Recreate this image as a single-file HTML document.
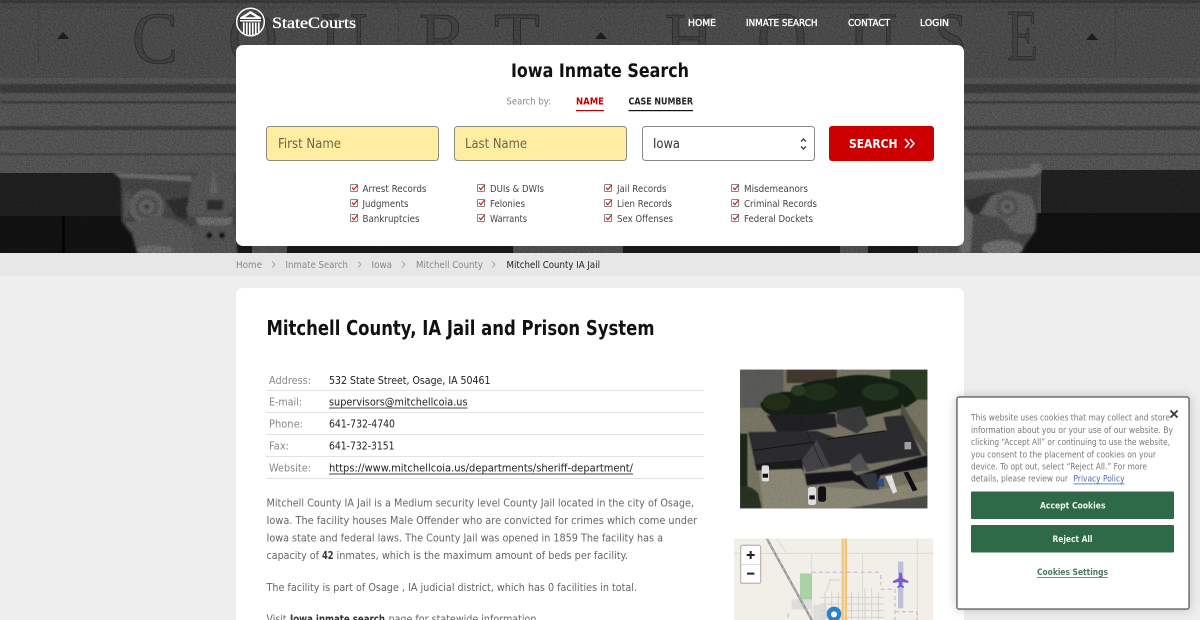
<!DOCTYPE html>
<html><head><meta charset="utf-8"><title>Mitchell County IA Jail</title>
<style>
html,body{margin:0;padding:0;background:#eee;width:1200px;height:620px;overflow:hidden}
svg{display:block}
text{font-family:"DejaVu Sans","Liberation Sans",sans-serif;font-size:10px;fill:#555}
.b{font-weight:bold}
.n{font-size:9.5px;fill:#fff;stroke:#fff;stroke-width:.35}
.c{font-size:9.5px;fill:#444}
.g{fill:#888}
.t{font-size:11px;fill:#888}
.v{font-size:11px;fill:#222}
.p{font-size:11px;fill:#666}
.k{font-size:8.8px;fill:#777}
.L{font-family:"Liberation Serif",serif;font-size:73px;fill:#484848;stroke:#2c2c2c;stroke-width:.8}
</style></head><body>
<svg width="1200" height="620" viewBox="0 0 1200 620" xmlns="http://www.w3.org/2000/svg">
<defs>
<filter id="noise" x="0" y="0" width="100%" height="100%" color-interpolation-filters="sRGB"><feTurbulence type="fractalNoise" baseFrequency="0.75" numOctaves="2" seed="4"/><feColorMatrix values="0 0 0 0 0  0 0 0 0 0  0 0 0 0 0  1.5 0 0 0 -0.55"/></filter>
<filter id="bl" x="-5%" y="-5%" width="110%" height="110%"><feGaussianBlur stdDeviation="0.7"/></filter>
<filter id="bz" x="-5%" y="-5%" width="110%" height="110%"><feGaussianBlur stdDeviation="3"/></filter>
<filter id="bp" x="-5%" y="-5%" width="110%" height="110%"><feGaussianBlur stdDeviation="1.4"/></filter>
<filter id="sh" x="-10%" y="-10%" width="120%" height="120%"><feDropShadow dx="0" dy="0" stdDeviation="5" flood-color="#000" flood-opacity=".2"/></filter>
</defs>
<rect width="1200" height="620" fill="#eee"/>
<!-- hero -->
<rect width="1200" height="253" fill="#525252"/>
<rect y="78" width="1200" height="95" fill="#5c5c5c"/>
<g filter="url(#bl)">
<rect y="0" width="1200" height="3" fill="#3a3a3a"/>
<rect y="7" width="1200" height="1" fill="#424242"/>
<rect y="84" width="1200" height="9" fill="#404040"/>
<rect y="101.500" width="1200" height="1.500" fill="#363636"/>
<rect y="126" width="1200" height="4" fill="#404040"/>
<rect y="153.500" width="1200" height="1.500" fill="#3a3a3a"/>
</g>
<g fill="#474747"><rect x="38" y="0" width="1" height="64"/><rect x="398" y="0" width="1" height="64"/><rect x="1115" y="8" width="1" height="56"/></g>
<g>
<text class="L" x="132" y="63" textLength="46" lengthAdjust="spacingAndGlyphs">C</text>
<text class="L" x="228" y="63" textLength="50" lengthAdjust="spacingAndGlyphs">O</text>
<text class="L" x="321" y="63" textLength="46" lengthAdjust="spacingAndGlyphs">U</text>
<text class="L" x="419" y="63" textLength="48" lengthAdjust="spacingAndGlyphs">R</text>
<text class="L" x="494" y="63" textLength="46" lengthAdjust="spacingAndGlyphs">T</text>
<text class="L" x="665" y="63" textLength="48" lengthAdjust="spacingAndGlyphs">H</text>
<text class="L" x="757" y="63" textLength="50" lengthAdjust="spacingAndGlyphs">O</text>
<text class="L" x="849" y="63" textLength="48" lengthAdjust="spacingAndGlyphs">U</text>
<text class="L" x="935" y="63" textLength="32" lengthAdjust="spacingAndGlyphs">S</text>
<text class="L" x="1007" y="60" textLength="31" lengthAdjust="spacingAndGlyphs">E</text>
</g>
<g fill="#202020"><path d="M57 39l6-7 6 7z"/><path d="M595 39l6-7 6 7z"/><path d="M1086 40l6-7 6 7z"/></g>
<!-- dark recess -->
<rect x="0" y="173" width="130" height="80" fill="#222"/>
<rect x="0" y="216" width="140" height="37" fill="#141414"/>
<rect x="62" y="216" width="3" height="37" fill="#050505"/>
<rect x="236" y="235" width="728" height="18" fill="#1c1c1c"/>
<g fill="#555"><rect x="252" y="246" width="35" height="7"/><rect x="513" y="246" width="110" height="7"/><rect x="840" y="246" width="28" height="7"/><rect x="918" y="246" width="46" height="7"/></g>
<rect x="1041" y="170" width="159" height="83" fill="#242424"/>
<rect x="1020" y="213" width="180" height="40" fill="#131313"/>
<!-- left capital -->
<g transform="translate(0 160) scale(.33333)" filter="url(#bz)">
<path d="M340 38H710V282H412L395 225 365 185 362 60z" fill="#4c4c4c"/>
<path d="M340 38L575 48V64L360 52z" fill="#757575"/>
<path d="M372 70L575 72V108L500 100 400 92z" fill="#4a4a4a"/>
<circle cx="440" cy="140" r="52" fill="#686868"/>
<circle cx="440" cy="140" r="34" fill="#565656"/><circle cx="440" cy="140" r="22" fill="#6d6d6d"/><circle cx="440" cy="140" r="9" fill="#474747"/>
<path d="M372 100L392 92 385 175 372 170z" fill="#5a5a5a"/>
<path d="M495 120L575 108 560 180 530 172z" fill="#303030"/>
<path d="M372 190L430 180 450 165 520 178 578 205 580 282H412L400 220z" fill="#5e5e5e"/>
<path d="M575 60L620 15 660 18 700 40 706 140 682 168 565 170 560 150z" fill="#5c5c5c"/>
<path d="M620 120L670 120 668 150 622 150z" fill="#303030"/>
<path d="M640 20L655 100 628 100z" fill="#6c6c6c"/>
<path d="M585 172L700 172 690 200 600 200z" fill="#757575"/>
<path d="M582 195L705 195 712 282H578z" fill="#5a5a5a"/>
<ellipse cx="628" cy="226" rx="9" ry="10" fill="#181818"/><ellipse cx="666" cy="226" rx="9" ry="10" fill="#181818"/>
<ellipse cx="465" cy="270" rx="55" ry="14" fill="#757575"/>
</g>
<!-- right capital -->
<g transform="translate(960 0) scale(.33333)" filter="url(#bz)">
<path d="M0 510H245L232 600 228 690 180 760H0z" fill="#4c4c4c"/>
<path d="M0 518L205 505 215 490 242 490 245 515 222 530 0 540z" fill="#757575"/>
<path d="M10 545L218 532 190 570 110 570 10 585z" fill="#4e4e4e"/>
<path d="M15 600L105 575 60 640 30 645z" fill="#343434"/>
<path d="M60 640L92 590 150 570 215 590 228 640 222 700 170 702 120 660z" fill="#676767"/>
<circle cx="142" cy="620" r="32" fill="#565656"/><circle cx="142" cy="620" r="20" fill="#707070"/><circle cx="142" cy="620" r="8" fill="#484848"/>
<path d="M28 650L122 650 180 722 130 728 62 760H10z" fill="#505050"/>
<ellipse cx="128" cy="745" rx="62" ry="24" fill="#787878"/>
<path d="M0 600L40 650 30 760H0z" fill="#757575"/>
</g>
<rect width="1200" height="253" filter="url(#noise)" opacity=".5"/>
<!-- logo -->
<circle cx="250.500" cy="22" r="13.800" fill="none" stroke="#fff" stroke-width="1.500"/>
<g fill="#fff"><path d="M240 17.500L250.500 11 261 17.500V19H240z"/><rect x="240" y="20" width="21" height="1.500"/><rect x="243" y="22.500" width="1.600" height="11"/><rect x="246" y="22.500" width="1.600" height="12.500"/><rect x="249" y="22.500" width="1.600" height="13"/><rect x="252" y="22.500" width="1.600" height="13"/><rect x="255" y="22.500" width="1.600" height="12.500"/><rect x="258" y="22.500" width="1.600" height="11"/></g>
<path d="M245 17.200L250.500 13.700 256 17.200z" fill="#4d4d4d"/>
<text x="272" y="28" textLength="84" lengthAdjust="spacingAndGlyphs" style="font-family:'Liberation Serif',serif;font-size:16px;fill:#fff;stroke:#fff;stroke-width:.3">StateCourts</text>
<!-- nav -->
<text class="n" x="688" y="26" textLength="28" lengthAdjust="spacingAndGlyphs">HOME</text>
<text class="n" x="746" y="26" textLength="71.500" lengthAdjust="spacingAndGlyphs">INMATE SEARCH</text>
<text class="n" x="848" y="26" textLength="42" lengthAdjust="spacingAndGlyphs">CONTACT</text>
<text class="n" x="920" y="26" textLength="29" lengthAdjust="spacingAndGlyphs">LOGIN</text>
<!-- search card -->
<rect x="236" y="45" width="728" height="201" rx="7" fill="#fff"/>
<text class="b" x="511" y="77" textLength="178" lengthAdjust="spacingAndGlyphs" style="font-size:18.500px;fill:#111">Iowa Inmate Search</text>
<text class="g" x="506.500" y="104.500" textLength="44.500" lengthAdjust="spacingAndGlyphs" style="font-size:9.500px">Search by:</text>
<text class="b" x="576" y="104.500" textLength="28" lengthAdjust="spacingAndGlyphs" style="font-size:9.500px;fill:#c00000">NAME</text>
<rect x="576" y="110" width="28" height="1.200" fill="#c00000"/>
<text class="b" x="628.500" y="104.500" textLength="64.500" lengthAdjust="spacingAndGlyphs" style="font-size:9.500px;fill:#222">CASE NUMBER</text>
<rect x="628.500" y="110" width="64.500" height="1.200" fill="#111"/>
<rect x="266.500" y="126.500" width="172" height="34" rx="3" fill="#ffeda2" stroke="#8f8f80"/>
<rect x="454.500" y="126.500" width="172" height="34" rx="3" fill="#ffeda2" stroke="#8f8f80"/>
<rect x="642.500" y="126.500" width="172" height="34" rx="3" fill="#fff" stroke="#888"/>
<text x="278" y="148" textLength="63" lengthAdjust="spacingAndGlyphs" style="font-size:13.500px;fill:#6b6648">First Name</text>
<text x="465" y="148" textLength="62" lengthAdjust="spacingAndGlyphs" style="font-size:13.500px;fill:#6b6648">Last Name</text>
<text x="653" y="148" textLength="27" lengthAdjust="spacingAndGlyphs" style="font-size:13.500px;fill:#333">Iowa</text>
<path d="M801 141.500L803.500 139 806 141.500M801 146.500L803.500 149 806 146.500" fill="none" stroke="#222" stroke-width="1.200"/>
<rect x="829" y="126" width="105" height="35" rx="3" fill="#cc0000"/>
<text class="b" x="849" y="148" textLength="48.500" lengthAdjust="spacingAndGlyphs" style="font-size:12.500px;fill:#fff">SEARCH</text>
<path d="M905 139l4 4.500-4 4.500M910 139l4 4.500-4 4.500" fill="none" stroke="#fff" stroke-width="1.500"/>
<!-- checks -->
<g fill="none" stroke-width="1">
<g><rect x="350.500" y="184.500" width="7" height="7" rx=".8" stroke="#888"/><path d="M352 187.500l1.800 2.200 4-5" stroke="#c00"/></g>
<g transform="translate(0 15)"><rect x="350.500" y="184.500" width="7" height="7" rx=".8" stroke="#888"/><path d="M352 187.500l1.800 2.200 4-5" stroke="#c00"/></g>
<g transform="translate(0 30)"><rect x="350.500" y="184.500" width="7" height="7" rx=".8" stroke="#888"/><path d="M352 187.500l1.800 2.200 4-5" stroke="#c00"/></g>
<g transform="translate(127 0)"><rect x="350.500" y="184.500" width="7" height="7" rx=".8" stroke="#888"/><path d="M352 187.500l1.800 2.200 4-5" stroke="#c00"/></g>
<g transform="translate(127 15)"><rect x="350.500" y="184.500" width="7" height="7" rx=".8" stroke="#888"/><path d="M352 187.500l1.800 2.200 4-5" stroke="#c00"/></g>
<g transform="translate(127 30)"><rect x="350.500" y="184.500" width="7" height="7" rx=".8" stroke="#888"/><path d="M352 187.500l1.800 2.200 4-5" stroke="#c00"/></g>
<g transform="translate(254 0)"><rect x="350.500" y="184.500" width="7" height="7" rx=".8" stroke="#888"/><path d="M352 187.500l1.800 2.200 4-5" stroke="#c00"/></g>
<g transform="translate(254 15)"><rect x="350.500" y="184.500" width="7" height="7" rx=".8" stroke="#888"/><path d="M352 187.500l1.800 2.200 4-5" stroke="#c00"/></g>
<g transform="translate(254 30)"><rect x="350.500" y="184.500" width="7" height="7" rx=".8" stroke="#888"/><path d="M352 187.500l1.800 2.200 4-5" stroke="#c00"/></g>
<g transform="translate(381 0)"><rect x="350.500" y="184.500" width="7" height="7" rx=".8" stroke="#888"/><path d="M352 187.500l1.800 2.200 4-5" stroke="#c00"/></g>
<g transform="translate(381 15)"><rect x="350.500" y="184.500" width="7" height="7" rx=".8" stroke="#888"/><path d="M352 187.500l1.800 2.200 4-5" stroke="#c00"/></g>
<g transform="translate(381 30)"><rect x="350.500" y="184.500" width="7" height="7" rx=".8" stroke="#888"/><path d="M352 187.500l1.800 2.200 4-5" stroke="#c00"/></g>
</g>
<text class="c" x="362.500" y="192" textLength="64" lengthAdjust="spacingAndGlyphs">Arrest Records</text>
<text class="c" x="362.500" y="207" textLength="46" lengthAdjust="spacingAndGlyphs">Judgments</text>
<text class="c" x="362.500" y="222" textLength="57" lengthAdjust="spacingAndGlyphs">Bankruptcies</text>
<text class="c" x="490" y="192" textLength="54" lengthAdjust="spacingAndGlyphs">DUIs &amp; DWIs</text>
<text class="c" x="490" y="207" textLength="35" lengthAdjust="spacingAndGlyphs">Felonies</text>
<text class="c" x="490" y="222" textLength="37" lengthAdjust="spacingAndGlyphs">Warrants</text>
<text class="c" x="617" y="192" textLength="49.500" lengthAdjust="spacingAndGlyphs">Jail Records</text>
<text class="c" x="617" y="207" textLength="55" lengthAdjust="spacingAndGlyphs">Lien Records</text>
<text class="c" x="617" y="222" textLength="56" lengthAdjust="spacingAndGlyphs">Sex Offenses</text>
<text class="c" x="744" y="192" textLength="64" lengthAdjust="spacingAndGlyphs">Misdemeanors</text>
<text class="c" x="744" y="207" textLength="73" lengthAdjust="spacingAndGlyphs">Criminal Records</text>
<text class="c" x="744" y="222" textLength="69" lengthAdjust="spacingAndGlyphs">Federal Dockets</text>
<!-- breadcrumb -->
<rect y="253" width="1200" height="23" fill="#e7e7e7"/>
<text class="g" x="236" y="268" textLength="26" lengthAdjust="spacingAndGlyphs" style="font-size:9.500px">Home</text>
<text class="g" x="285.500" y="268" textLength="62.500" lengthAdjust="spacingAndGlyphs" style="font-size:9.500px">Inmate Search</text>
<text class="g" x="371.500" y="268" textLength="20.500" lengthAdjust="spacingAndGlyphs" style="font-size:9.500px">Iowa</text>
<text class="g" x="416" y="268" textLength="67" lengthAdjust="spacingAndGlyphs" style="font-size:9.500px">Mitchell County</text>
<text x="506.500" y="268" textLength="93.500" lengthAdjust="spacingAndGlyphs" style="font-size:9.500px;fill:#222">Mitchell County IA Jail</text>
<path d="M272 261.500l3 3-3 3M358 261.500l3 3-3 3M402 261.500l3 3-3 3M492 261.500l3 3-3 3" fill="none" stroke="#aaa" stroke-width="1"/>
<!-- main card -->
<rect x="236" y="288" width="728" height="345" rx="7" fill="#fff"/>
<text class="b" x="266.500" y="335" textLength="388" lengthAdjust="spacingAndGlyphs" style="font-size:20px;fill:#111">Mitchell County, IA Jail and Prison System</text>
<g fill="#e3e3e3"><rect x="266" y="390" width="438" height="1"/><rect x="266" y="412" width="438" height="1"/><rect x="266" y="434" width="438" height="1"/><rect x="266" y="456" width="438" height="1"/><rect x="266" y="478" width="438" height="1"/></g>
<text class="t" x="269" y="384" textLength="42" lengthAdjust="spacingAndGlyphs">Address:</text>
<text class="t" x="269" y="405.700" textLength="33" lengthAdjust="spacingAndGlyphs">E-mail:</text>
<text class="t" x="269" y="427.700" textLength="34" lengthAdjust="spacingAndGlyphs">Phone:</text>
<text class="t" x="269" y="449.700" textLength="20" lengthAdjust="spacingAndGlyphs">Fax:</text>
<text class="t" x="269" y="471.700" textLength="42" lengthAdjust="spacingAndGlyphs">Website:</text>
<text class="v" x="329" y="384" textLength="161.500" lengthAdjust="spacingAndGlyphs">532 State Street, Osage, IA 50461</text>
<text class="v" x="329" y="405.700" textLength="138.500" lengthAdjust="spacingAndGlyphs">supervisors@mitchellcoia.us</text>
<rect x="329" y="407.500" width="138.500" height="1" fill="#444"/>
<text class="v" x="329" y="427.700" textLength="66" lengthAdjust="spacingAndGlyphs">641-732-4740</text>
<text class="v" x="329" y="449.700" textLength="65.500" lengthAdjust="spacingAndGlyphs">641-732-3151</text>
<text class="v" x="329" y="471.700" textLength="304" lengthAdjust="spacingAndGlyphs">https://www.mitchellcoia.us/departments/sheriff-department/</text>
<rect x="329" y="473.500" width="304" height="1" fill="#444"/>
<text class="p" x="266.500" y="506.500" textLength="427.500" lengthAdjust="spacingAndGlyphs">Mitchell County IA Jail is a Medium security level County Jail located in the city of Osage,</text>
<text class="p" x="266.500" y="524" textLength="430.500" lengthAdjust="spacingAndGlyphs">Iowa. The facility houses Male Offender who are convicted for crimes which come under</text>
<text class="p" x="266.500" y="541.500" textLength="396.500" lengthAdjust="spacingAndGlyphs">Iowa state and federal laws. The County Jail was opened in 1859 The facility has a</text>
<text class="p" x="266.500" y="559" textLength="52.500" lengthAdjust="spacingAndGlyphs">capacity of</text>
<text class="p b" x="322" y="559" textLength="11.500" lengthAdjust="spacingAndGlyphs" style="fill:#333">42</text>
<text class="p" x="336.500" y="559" textLength="291.500" lengthAdjust="spacingAndGlyphs">inmates, which is the maximum amount of beds per facility.</text>
<text class="p" x="266.500" y="591" textLength="370.500" lengthAdjust="spacingAndGlyphs">The facility is part of Osage , IA judicial district, which has 0 facilities in total.</text>
<text class="p" x="266.500" y="622.500" textLength="20" lengthAdjust="spacingAndGlyphs">Visit</text>
<text class="p b" x="290" y="622.500" textLength="95" lengthAdjust="spacingAndGlyphs" style="fill:#333">Iowa inmate search</text>
<text class="p" x="388.500" y="622.500" textLength="151" lengthAdjust="spacingAndGlyphs">page for statewide information.</text>
<!-- photo -->
<svg x="740" y="369.500" width="187.500" height="139" viewBox="60 28 562 416">
<rect x="60" y="28" width="562" height="416" fill="#7d7a68"/>
<g filter="url(#bp)">
<rect x="60" y="28" width="130" height="115" fill="#5f5f5b"/>
<rect x="60" y="143" width="110" height="75" fill="#7f7c69"/>
<rect x="200" y="28" width="150" height="40" fill="#443a30"/>
<rect x="510" y="28" width="112" height="90" fill="#2f4026"/>
<path d="M120 130Q160 90 210 95Q240 60 340 55Q430 30 520 60Q570 70 590 120L560 140 440 170 340 155 260 175 170 170Q125 160 120 130z" fill="#182414"/>
<ellipse cx="170" cy="125" rx="42" ry="26" fill="#223319"/><ellipse cx="300" cy="95" rx="50" ry="26" fill="#20301a"/><ellipse cx="480" cy="95" rx="55" ry="26" fill="#243520"/><ellipse cx="235" cy="90" rx="22" ry="16" fill="#2b3f23"/>
<path d="M140 165L345 160 350 200 230 215 170 215z" fill="#242428"/>
<path d="M545 130L622 250V290L540 170z" fill="#55544a"/>
<path d="M85 215L290 212 345 232 500 210 490 170 550 165 605 285 450 310 400 305 260 335 240 296 105 310z" fill="#2e2e32"/>
<path d="M350 150L425 138 445 195 410 220 350 190z" fill="#3c3c40"/>
<path d="M245 300L290 238 330 320 260 335z" fill="#47474b"/>
<path d="M390 300L420 278 450 330 395 335z" fill="#56565a"/>
<path d="M105 310L245 296 250 330 150 335 110 330z" fill="#1b1b1d"/>
<path d="M255 340L395 330 410 345 600 290 622 285V320L480 345 470 385 440 385 400 360 260 375z" fill="#17181a"/>
<path d="M415 342L468 338 478 388 445 388z" fill="#343a40"/>
<rect x="60" y="220" width="22" height="224" fill="#1f2a1b"/>
<path d="M60 380Q90 370 115 400L125 444H60z" fill="#2a3626"/>
<path d="M115 330L245 325 260 380 300 378 470 390 622 360V405L380 444H130z" fill="#928f7b"/>
<path d="M380 444L622 405V444z" fill="#50504b"/>
</g>
<path d="M100 270L285 245M320 237L495 212" stroke="#161616" stroke-width="3" fill="none"/>
<path d="M230 150L310 320" stroke="#1d1d1d" stroke-width="2" fill="none"/>
<rect x="125" y="315" width="22" height="48" rx="6" fill="#eee"/><rect x="128" y="340" width="16" height="12" fill="#111"/>
<rect x="264" y="380" width="24" height="54" rx="7" fill="#eee"/><rect x="268" y="405" width="16" height="12" fill="#111"/>
<rect x="294" y="378" width="24" height="46" rx="8" fill="#101114"/>
<path d="M495 348l20-4 16 50-12 6z" fill="#eee"/>
<path d="M550 336l14-2 28 55-14 4z" fill="#101114"/>
<rect x="474" y="355" width="18" height="24" fill="#33518c"/>
<rect x="553" y="245" width="20" height="22" fill="#aaa"/>
<rect x="60" y="28" width="562" height="416" filter="url(#noise)" opacity=".3"/>
</svg>
<!-- map -->
<svg x="734" y="538.500" width="200" height="82" viewBox="0 0 200 82">
<g transform="translate(-14 -178.500) scale(.33333)">
<rect x="40" y="535" width="600" height="250" fill="#f2efe9"/>
<path d="M40 580H640M592 535V785M275 580V785M428 580V785M180 580L200 580 170 535" stroke="#dcd9d3" stroke-width="3" fill="none"/>
<path d="M240 640h36v80h-36z" fill="#a9d3a6"/>
<path d="M215 718h60v30h-60z" fill="#ddd"/><path d="M280 735h40v50h-40z" fill="#ddd"/>
<g stroke="#d4d2cf" stroke-width="3" fill="none"><path d="M315 695V785M335 695V785M355 695V785M395 695V785M415 695V785M435 685V785M455 685V785M475 695V785M300 712H490M300 732H490M300 752H490M300 772H490M320 695L330 660H360"/></g>
<path d="M140 535L278 785" stroke="#999" stroke-width="7" fill="none"/><path d="M140 535L278 785" stroke="#ccc" stroke-width="2" stroke-dasharray="10 10" fill="none"/>
<rect x="365" y="535" width="16" height="250" fill="#f3c27a"/><rect x="371" y="535" width="4" height="250" fill="#fadfae"/>
<path d="M275 637H482M482 645V675M482 688H525V780M525 755H590V785M205 760V785" stroke="#cfc0d3" stroke-width="4" stroke-dasharray="12 9" fill="none"/>
<rect x="534" y="605" width="16" height="140" fill="#bcbfd6"/>
<path d="M538 638h7l2 16 18 9v6l-18-3-1 9 6 5v4l-10-3-10 3v-4l6-5-1-9-18 3v-6l18-9z" fill="#7a5cc8"/>
<path d="M342 740a22 22 0 0 1 22 22c0 14-22 34-22 34s-22-20-22-34a22 22 0 0 1 22-22z" fill="#2a81cb"/><circle cx="342" cy="763" r="9" fill="#fff"/>
<rect x="62" y="556" width="60" height="114" rx="5" fill="#fff" stroke="#bbb" stroke-width="4"/>
<rect x="64" y="612" width="56" height="2" fill="#ccc"/>
<path d="M80 585H104M92 573V597M81 641H103" stroke="#222" stroke-width="6" fill="none"/>
</g>
</svg>
<!-- cookie -->
<rect x="957" y="397" width="232" height="212" fill="#fff" stroke="#777" stroke-width="1.500" rx="2" filter="url(#sh)"/>
<rect x="957" y="397" width="232" height="212" fill="#fff" stroke="#777" stroke-width="1.500" rx="2"/>
<text class="k" x="971" y="420.700" textLength="199" lengthAdjust="spacingAndGlyphs">This website uses cookies that may collect and store</text>
<text class="k" x="971" y="432.900" textLength="202" lengthAdjust="spacingAndGlyphs">information about you or your use of our website. By</text>
<text class="k" x="971" y="445.100" textLength="199" lengthAdjust="spacingAndGlyphs">clicking “Accept All” or continuing to use the website,</text>
<text class="k" x="971" y="457.300" textLength="185" lengthAdjust="spacingAndGlyphs">you consent to the placement of cookies on your</text>
<text class="k" x="971" y="469.500" textLength="176" lengthAdjust="spacingAndGlyphs">device. To opt out, select “Reject All.” For more</text>
<text class="k" x="971" y="481.700" textLength="97" lengthAdjust="spacingAndGlyphs">details, please review our</text>
<text class="k" x="1073.500" y="481.700" textLength="51" lengthAdjust="spacingAndGlyphs" style="fill:#4a67b5">Privacy Policy</text>
<rect x="1073.500" y="483.500" width="51" height=".8" fill="#4a67b5"/>
<path d="M1170.500 410.500l7 7M1177.500 410.500l-7 7" stroke="#333" stroke-width="1.700" fill="none"/>
<rect x="971" y="491.500" width="203" height="27.500" rx="1" fill="#2e6a47"/>
<rect x="971" y="525" width="203" height="27.500" rx="1" fill="#2e6a47"/>
<text class="b" x="1040" y="508.500" textLength="65.500" lengthAdjust="spacingAndGlyphs" style="font-size:9px;fill:#eef5ef">Accept Cookies</text>
<text class="b" x="1052.500" y="542" textLength="40" lengthAdjust="spacingAndGlyphs" style="font-size:9px;fill:#eef5ef">Reject All</text>
<text class="b" x="1037" y="575" textLength="71" lengthAdjust="spacingAndGlyphs" style="font-size:9px;fill:#4b7a5e">Cookies Settings</text>
<rect x="1037" y="577" width="71" height=".8" fill="#4b7a5e"/>
</svg>
</body></html>
